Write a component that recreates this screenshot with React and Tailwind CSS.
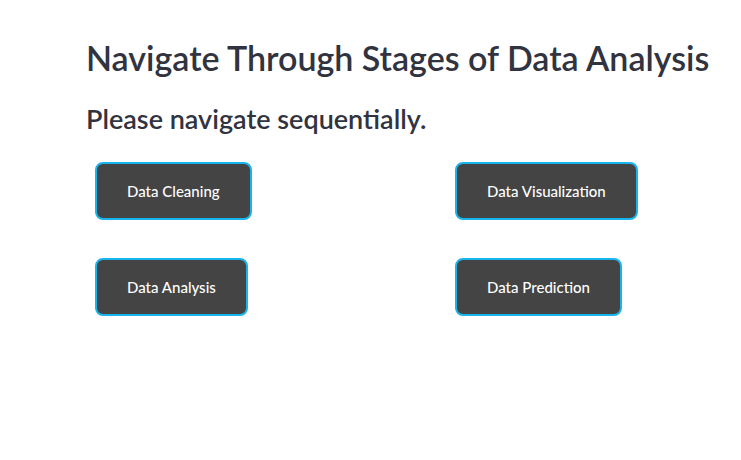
const stages = [
  ["Data Cleaning", "Data Visualization"],
  ["Data Analysis", "Data Prediction"],
];

const StageButton = ({ label }) => (
  <button className="h-[58px] px-[30px] rounded-lg border-2 border-[#18b4ee] bg-[#444444] text-[15px] font-medium text-white">
    {label}
  </button>
);

export default function App() {
  return (
    <div
      className="w-[741px] h-[460px] bg-white pl-[86px] pt-[34px]"
      style={{ fontFamily: "Lato, 'Open Sans', sans-serif" }}
    >
      <h1 className="text-[34px] font-semibold leading-[48px] text-[#31333f]">
        Navigate Through Stages of Data Analysis
      </h1>
      <h2 className="mt-[19px] text-[27px] font-semibold leading-[36px] text-[#31333f]">
        Please navigate sequentially.
      </h2>
      <div className="mt-[25px] ml-[9px] flex flex-col gap-[38px]">
        {stages.map((row) => (
          <div key={row[0]} className="grid grid-cols-[360px_1fr]">
            {row.map((label) => (
              <div key={label}>
                <StageButton label={label} />
              </div>
            ))}
          </div>
        ))}
      </div>
    </div>
  );
}
